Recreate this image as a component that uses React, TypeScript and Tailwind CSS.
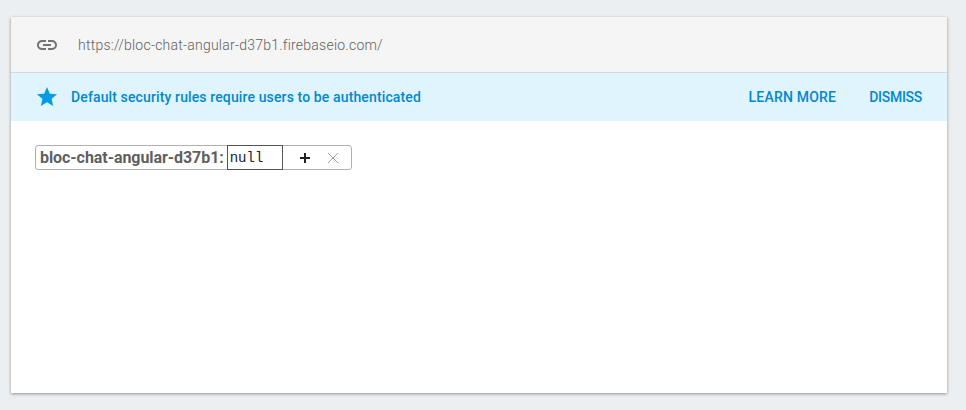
export default function App() {
  return (
    <div className="h-[410px] w-[966px] overflow-hidden bg-[#eceff1] pt-[17px] pl-[11px] font-['Roboto',sans-serif]">
      <div className="flex h-[376px] w-[936px] flex-col bg-white shadow-[0_1px_3px_rgba(0,0,0,0.4)]">
        <div className="flex h-[56px] shrink-0 items-center border-b border-[#d5d7da] bg-[#f5f5f5] pl-[24px]">
          <svg viewBox="0 0 24 24" className="h-[24px] w-[24px] fill-[#757575]">
            <path d="M3.9 12c0-1.71 1.39-3.1 3.1-3.1h4V7H7c-2.76 0-5 2.24-5 5s2.24 5 5 5h4v-1.9H7c-1.71 0-3.1-1.39-3.1-3.1zM8 13h8v-2H8v2zm9-6h-4v1.9h4c1.71 0 3.1 1.39 3.1 3.1s-1.39 3.1-3.1 3.1h-4V17h4c2.76 0 5-2.24 5-5s-2.24-5-5-5z" />
          </svg>
          <span className="mt-[1px] ml-[19px] text-[14px] font-light tracking-[0.235px] text-[#616161]">https://bloc-chat-angular-d37b1.firebaseio.com/</span>
        </div>
        <div className="flex h-[48px] shrink-0 items-center bg-[#dff4fd] pr-[25px] pl-[24px] text-[14px] font-medium text-[#0288d1]">
          <svg viewBox="0 0 24 24" className="h-[24px] w-[24px] fill-[#039be5]">
            <path d="M12 17.27 18.18 21l-1.64-7.03L22 9.24l-7.19-.61L12 2 9.19 8.63 2 9.24l5.46 4.73L5.82 21z" />
          </svg>
          <span className="ml-[12px] flex-1 tracking-[0.125px]">Default security rules require users to be authenticated</span>
          <span className="tracking-[0.2px]">LEARN MORE</span>
          <span className="ml-[33px] tracking-[-0.28px]">DISMISS</span>
        </div>
        <div className="pt-[24px] pl-[24px]">
          <div className="flex h-[25px] w-[317px] items-center rounded-[3px] border border-[#b0b0b4] pl-[4px]">
            <span className="text-[16px] font-bold tracking-[-0.06px] text-[#5f5f5f]">bloc-chat-angular-d37b1:</span>
            <span className="ml-[3px] flex h-[25px] w-[56px] items-center border border-[#555] pt-[2px] pl-[2px] font-['Liberation_Mono',monospace] text-[14px] text-[#222]">null</span>
            <svg viewBox="0 0 10 10" className="ml-[17px] h-[10px] w-[10px] fill-[#212121]">
              <path d="M4 0h2v4h4v2H6v4H4V6H0V4h4z" />
            </svg>
            <svg viewBox="0 0 10 10" className="ml-[18px] h-[10px] w-[10px] stroke-[#888]" fill="none" strokeWidth="0.8">
              <path d="M0 0 10 10M10 0 0 10" />
            </svg>
          </div>
        </div>
      </div>
    </div>
  );
}
